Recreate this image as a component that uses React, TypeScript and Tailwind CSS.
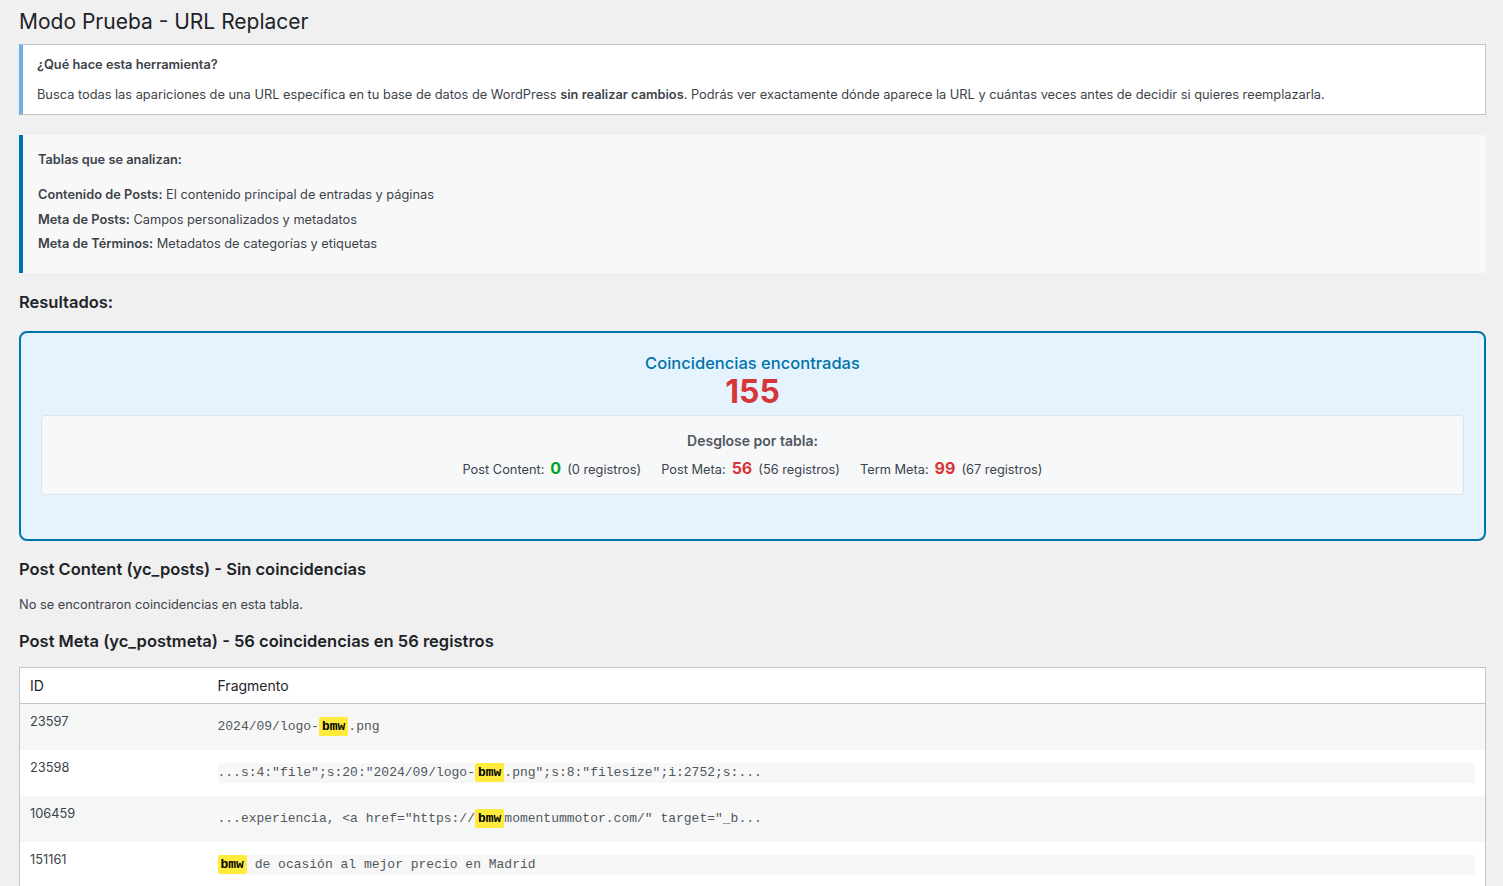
import React from 'react'

const rows: { id: string; parts: (string | { m: string })[] }[] = [
  { id: '23597', parts: ['2024/09/logo-', { m: 'bmw' }, '.png'] },
  { id: '23598', parts: ['...s:4:"file";s:20:"2024/09/logo-', { m: 'bmw' }, '.png";s:8:"filesize";i:2752;s:...'] },
  { id: '106459', parts: ['...experiencia, <a href="https://', { m: 'bmw' }, 'momentummotor.com/" target="_b...'] },
  { id: '151161', parts: [{ m: 'bmw' }, ' de ocasión al mejor precio en Madrid'] },
]

function Stat({ label, value, regs, color }: { label: string; value: string; regs: string; color: string }) {
  return (
    <span className="flex items-baseline gap-[6px]">
      <span>{label}</span>
      <span className={`text-[16px] font-bold ${color}`}>{value}</span>
      <span>({regs} registros)</span>
    </span>
  )
}

export default function App() {
  return (
    <div className="min-h-screen bg-[#f0f0f1] font-[Inter,'Noto_Sans',sans-serif] text-[12.8px] text-[#3c434a] pl-[19px] pr-[17px] pt-[7px]">
      <h1 className="text-[21px] leading-[30px] text-[#1d2327] font-normal">Modo Prueba - URL Replacer</h1>

      <div className="mt-[7px] bg-white border border-[#c3c4c7] border-l-4 border-l-[#72aee6] pl-[14px] pt-[11px] pb-[10px]">
        <p className="font-semibold leading-[18px]">¿Qué hace esta herramienta?</p>
        <p className="mt-[12px] leading-[18px]">
          Busca todas las apariciones de una URL específica en tu base de datos de WordPress <strong className="font-semibold">sin realizar cambios</strong>. Podrás ver exactamente dónde aparece la URL y cuántas veces antes de decidir si quieres reemplazarla.
        </p>
      </div>

      <div className="mt-[20px] bg-[#f8f8f8] border-l-4 border-l-[#0073aa] pl-[15px] pt-[16px] pb-[20px]">
        <p className="font-semibold leading-[18px]">Tablas que se analizan:</p>
        <ul className="mt-[17px] flex flex-col gap-[6.5px] leading-[18px]">
          <li><strong className="font-semibold">Contenido de Posts:</strong> El contenido principal de entradas y páginas</li>
          <li><strong className="font-semibold">Meta de Posts:</strong> Campos personalizados y metadatos</li>
          <li><strong className="font-semibold">Meta de Términos:</strong> Metadatos de categorías y etiquetas</li>
        </ul>
      </div>

      <h3 className="mt-[18px] text-[16.5px] leading-[22px] font-semibold text-[#1d2327]">Resultados:</h3>

      <div className="mt-[18px] border-2 border-[#0073aa] rounded-[8px] bg-[#e5f3ff] p-[20px] pb-[44px]">
        <div className="text-center text-[16.5px] leading-[20px] font-medium text-[#0073aa]">Coincidencias encontradas</div>
        <div className="text-center text-[32px] leading-[38px] font-bold text-[#d63638]">155</div>
        <div className="mt-[4px] bg-[#f6f8fa] border border-[#dce3ea] rounded-[4px] pt-[15px] pb-[14px] text-center">
          <div className="text-[14px] leading-[20px] font-semibold text-[#50575e]">Desglose por tabla:</div>
          <div className="mt-[7px] flex justify-center gap-[20px] leading-[20px]">
            <Stat label="Post Content:" value="0" regs="0" color="text-[#00a32a]" />
            <Stat label="Post Meta:" value="56" regs="56" color="text-[#d63638]" />
            <Stat label="Term Meta:" value="99" regs="67" color="text-[#d63638]" />
          </div>
        </div>
      </div>

      <h3 className="mt-[17px] text-[16.5px] leading-[22px] font-semibold text-[#1d2327]">Post Content (yc_posts) - Sin coincidencias</h3>
      <p className="mt-[16px] leading-[18px]">No se encontraron coincidencias en esta tabla.</p>
      <h3 className="mt-[16px] text-[16.5px] leading-[22px] font-semibold text-[#1d2327]">Post Meta (yc_postmeta) - 56 coincidencias en 56 registros</h3>

      <table className="mt-[15px] w-full border border-[#c3c4c7] bg-white border-collapse">
        <thead>
          <tr className="border-b border-[#c3c4c7]">
            <th className="w-[188px] text-left font-normal text-[14px] text-[#1d2327] px-[10px] py-[8px] leading-[19px]">ID</th>
            <th className="text-left font-normal text-[14px] text-[#1d2327] px-[10px] py-[8px] leading-[19px]">Fragmento</th>
          </tr>
        </thead>
        <tbody>
          {rows.map((r, i) => (
            <tr key={r.id} className={i % 2 === 0 ? 'bg-[#f5f6f6]' : 'bg-white'}>
              <td className="align-top px-[10px] py-[8px] leading-[20px]">{r.id}</td>
              <td className="align-top px-[10px] py-[8px]">
                <code className="block my-[5px] bg-[#f7f7f7] font-['Liberation_Mono',monospace] text-[13px] leading-[20px] text-[#50575e] whitespace-pre">
                  {r.parts.map((p, j) =>
                    typeof p === 'string' ? (
                      <span key={j}>{p}</span>
                    ) : (
                      <mark key={j} className="bg-[#ffeb3b] text-black font-bold px-[3px] py-[2px] rounded-[2px]">{p.m}</mark>
                    )
                  )}
                </code>
              </td>
            </tr>
          ))}
        </tbody>
      </table>
    </div>
  )
}
